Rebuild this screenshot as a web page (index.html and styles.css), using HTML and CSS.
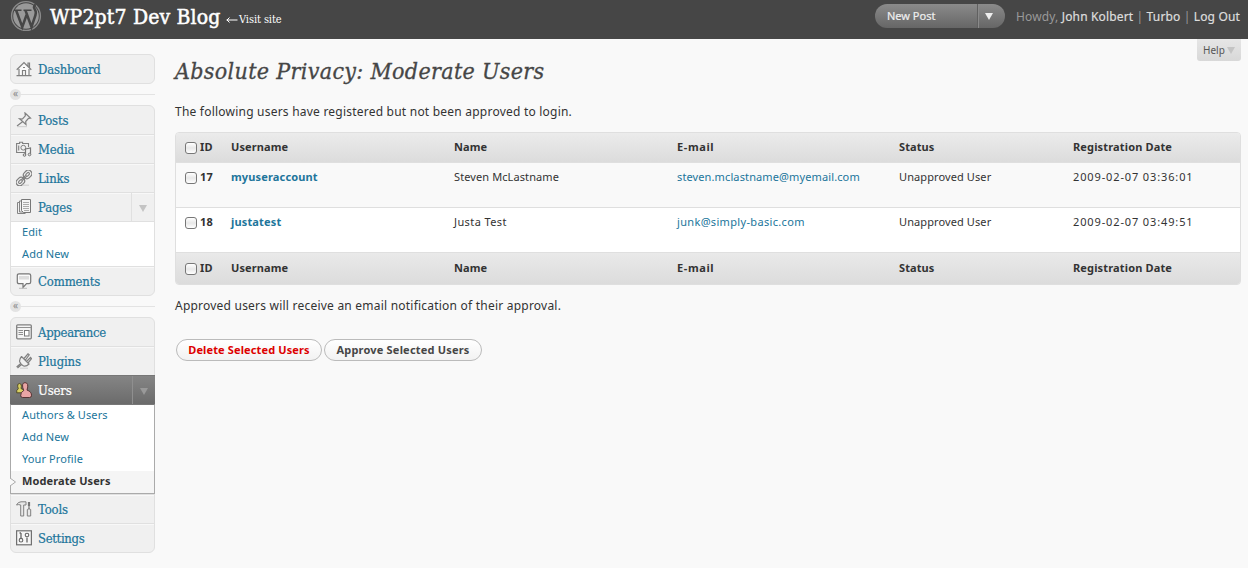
FILE: index.html
```html
<!DOCTYPE html>
<html lang="en">
<head>
<meta charset="utf-8">
<title>Absolute Privacy: Moderate Users</title>
<link rel="stylesheet" href="styles.css">
</head>
<body>
<header class="topbar">
  <svg class="logo" viewBox="0 0 32 32"><circle cx="16" cy="16" r="14.400" fill="#464646" stroke="#8b8b8b" stroke-width="1.400"/><circle cx="16" cy="16" r="12.800" fill="#999"/><path d="M4 10.300h7.500M13.500 10.300h8" fill="none" stroke="#464646" stroke-width="1.400"/><path d="M6.200 10.500l6.100 16.500L16.500 15M15.500 10.500l6 16.500 4-12c.9-3 .2-4.500-1-6.200-1.200-1.800-.2-3.800 1.300-4" fill="none" stroke="#464646" stroke-width="2.500"/></svg>
  <h1 class="site">WP2pt7 Dev Blog</h1>
  <a class="visit"><svg class="larrow" viewBox="0 0 12 8"><path d="M0.500 4h11M3.500 1.500L1 4l2.500 2.500" fill="none" stroke="#fff"/></svg><span>Visit site</span></a>
  <div class="newpost"><span class="np-label">New Post</span><span class="np-tog"><i class="tri"></i></span></div>
  <div class="howdy">Howdy, <a>John Kolbert</a> | <a>Turbo</a> | <a>Log Out</a></div>
</header>
<div class="page">
  <nav class="menu">
    <div class="group">
      <div class="item"><svg class="ico" viewBox="0 0 16 16"><path d="M3 8v6.500h10V8L8 3z" fill="#fafafa"/><path d="M.7 8.700L8 1.500l7.300 7.200M12 5V2h1.500v4.500M3 8v6.500h10V8M6.500 14.500V9.500h3v5M0.500 14.700h15M7 6.500h2" fill="none" stroke="#808080" stroke-width="1.200"/></svg><a class="t-dash">Dashboard</a></div>
    </div>
    <div class="sep"><span class="dot">«</span><span class="rule"></span></div>
    <div class="group">
      <div class="item"><svg class="ico" viewBox="0 0 16 16"><path d="M9 1l5.500 5-2 .3L9.700 9.500l.3 3L3.500 6.800l3 .2L9.300 3.800zM6.500 9.700L1 14" fill="#eee" stroke="#808080" stroke-width="1.200"/><path d="M1 14.700h10" stroke="#ccc"/></svg><a class="t-posts">Posts</a></div>
      <div class="item"><svg class="ico" viewBox="0 0 16 16"><path d="M9 11.500H.6v-9h3V1.200h3v1.300h5.900V6M2.700 4.500v5" fill="none" stroke="#808080" stroke-width="1.100"/><circle cx="7.300" cy="6.700" r="2.400" fill="none" stroke="#808080"/><path d="M9.500 14V8l5-1v6.500" fill="none" stroke="#777" stroke-width="1.200"/><circle cx="8.500" cy="14" r="1.300" fill="#ddd" stroke="#777"/><circle cx="13.500" cy="13.500" r="1.300" fill="#ddd" stroke="#777"/></svg><a class="t-media">Media</a></div>
      <div class="item"><svg class="ico" viewBox="0 0 16 16"><g fill="none" stroke="#808080" stroke-width="1.200" transform="rotate(-45 8 8)"><rect x="-1.600" y="4.500" width="9" height="7" rx="3.500"/><rect x=".8" y="6.800" width="4.200" height="2.400" rx="1.200"/><rect x="8.600" y="4.500" width="9" height="7" rx="3.500"/><rect x="11" y="6.800" width="4.200" height="2.400" rx="1.200"/><path d="M5 7.300h6M5 8.700h6"/></g><path d="M6 15.200h7" stroke="#ccc"/></svg><a class="t-links">Links</a></div>
      <div class="item has-tog"><svg class="ico" viewBox="0 0 16 16"><path d="M3 3.500H1.500v11h8M5 2H3.500v11h8" fill="none" stroke="#858585"/><path d="M5.500.5h9v13h-7l-2-2z" fill="#f4f4f4" stroke="#777"/><path d="M7 3.500h6M7 5.500h6M7 7.500h6M7 9.500h6M8 11.500h5" stroke="#aaa"/></svg><a class="t-pages">Pages</a><span class="tog"><i class="tri"></i></span></div>
      <div class="sub"><a>Edit</a><a>Add New</a></div>
      <div class="item"><svg class="ico" viewBox="0 0 16 16"><path d="M3 .8h10q1.700 0 1.700 1.700v6.500q0 1.700-1.700 1.700h-2.500L7 14.500v-3.800H3Q1.300 10.700 1.300 9V2.500Q1.300.8 3 .8z" fill="#fafafa" stroke="#777" stroke-width="1.200"/><path d="M3 3h10v3.500H3z" fill="#ddd"/><path d="M3 15.300h8" stroke="#bbb"/></svg><a class="t-comm">Comments</a></div>
    </div>
    <div class="sep"><span class="dot">«</span><span class="rule"></span></div>
    <div class="group">
      <div class="item"><svg class="ico" viewBox="0 0 16 16"><rect x=".7" y=".8" width="14.600" height="14" rx="1" fill="#f4f4f4" stroke="#808080" stroke-width="1.300"/><path d="M1 3.500h14M2.500 6.500H7M2.500 8.500H7M2.500 10.500H7" stroke="#909090"/><rect x="8.500" y="6.500" width="4.500" height="5.500" fill="#fff" stroke="#777"/></svg><a class="t-app">Appearance</a></div>
      <div class="item"><svg class="ico" viewBox="0 0 16 16"><path d="M5.500 3.500l7.500 7.500Q10.500 13.700 7.500 13L5.500 11.500 1.500 15M5.500 3.500Q3 6.500 3.800 9l1 1.500L.6 14M8 5.500L12 .8l1.200 1L9.500 7M10.500 8.500L14.500 4.500l1 1.200L12 10" fill="none" stroke="#808080" stroke-width="1.200"/><path d="M4 15.200h8" stroke="#ccc"/></svg><a class="t-plug">Plugins</a></div>
      <div class="item current"><svg class="ico" viewBox="0 0 16 16"><path d="M.7 10.800q-.5-3 1.600-4Q.6 1.800 3.400 1.500 6.200 1.800 5 6.500L8 8v2.800z" fill="#d9d164" stroke="#4c4420" stroke-width=".9"/><path d="M4.700 13.800q-.2-4 3-5.200Q4.800.9 9 .6q4.300.3 2 7.500 4.800 1.500 4.500 5.700-.3 1.700-2 1.700H6.700q-1.800 0-2-1.700z" fill="#e9a5a5" stroke="#4d2a2a" stroke-width=".9"/></svg><a class="t-users">Users</a><span class="tog"><i class="tri"></i></span></div>
      <div class="sub current-sub"><a>Authors &amp; Users</a><a>Add New</a><a>Your Profile</a><a class="on">Moderate Users<svg class="notch" viewBox="0 0 6 8"><path d="M0 0l5.500 4L0 8" fill="#f9f9f9" stroke="#aaa"/></svg></a></div>
      <div class="item"><svg class="ico" viewBox="0 0 16 16"><path d="M.5 4Q2 .8 5 .8h5v3.200H7.700v11h-3V4q-2.200-.8-4.200 0zM11.300 15V8.500q1.700-1.500 3.400 0V15z" fill="#e8e8e8" stroke="#808080"/><path d="M13 1v7M12.500 1.500h1v3h-1z" stroke="#777" stroke-width="1.200"/></svg><a class="t-tools">Tools</a></div>
      <div class="item"><svg class="ico" viewBox="0 0 16 16"><rect x=".6" y=".8" width="14.800" height="14" fill="#f6f6f6" stroke="#707070" stroke-width="1.200"/><path d="M5 3v5M11 12.500V7.500M3.500 3h1.500" stroke="#666" stroke-width="1.300"/><circle cx="5" cy="10.200" r="1.800" fill="none" stroke="#666" stroke-width="1.100"/><circle cx="11" cy="5" r="1.800" fill="none" stroke="#666" stroke-width="1.100"/></svg><a class="t-set">Settings</a></div>
    </div>
  </nav>
  <main class="main">
    <div class="help">Help <i class="tri"></i></div>
    <h2 class="title">Absolute Privacy: Moderate Users</h2>
    <p class="intro">The following users have registered but not been approved to login.</p>
    <div class="table">
      <div class="row head"><b><i class="cb"></i>ID</b><b>Username</b><b>Name</b><b class="em">E-mail</b><b>Status</b><b class="reg">Registration Date</b></div>
      <div class="row"><b><i class="cb"></i>17</b><a class="u">myuseraccount</a><span>Steven McLastname</span><a class="mail">steven.mclastname@myemail.com</a><span>Unapproved User</span><span class="date">2009-02-07 03:36:01</span></div>
      <div class="row alt"><b><i class="cb"></i>18</b><a class="u u2">justatest</a><span class="short">Justa Test</span><a class="mail2">junk@simply-basic.com</a><span>Unapproved User</span><span class="date">2009-02-07 03:49:51</span></div>
      <div class="row foot"><b><i class="cb"></i>ID</b><b>Username</b><b>Name</b><b class="em">E-mail</b><b>Status</b><b class="reg">Registration Date</b></div>
    </div>
    <p class="outro">Approved users will receive an email notification of their approval.</p>
    <div class="btns"><button class="btn del">Delete Selected Users</button><button class="btn app">Approve Selected Users</button></div>
  </main>
</div>
</body>
</html>
```
FILE: styles.css
```css
* { box-sizing: border-box; }
body { margin: 0; height: 568px; overflow: hidden; background: #f9f9f9; color: #333; font: 11px/16px "Noto Sans", "Open Sans", sans-serif; }
h1, h2, p { margin: 0; font-weight: normal; }
a { color: #21759b; }
svg { display: block; flex: none; }
.tri { display: inline-block; width: 0; height: 0; border: 4px solid transparent; border-top: 7px solid #c4c4c4; border-bottom: 0; }

.topbar { height: 39px; background: #464646; display: flex; align-items: flex-start; padding-right: 7px; white-space: nowrap; }
.logo { width: 32px; height: 32px; margin: 0 0 0 10px; }
.site { margin-left: 8px; width: 176px; color: #fff; font: 21px/34px "DejaVu Serif Condensed", "DejaVu Serif", serif; letter-spacing: .15px; -webkit-text-stroke: .5px #fff; }
.visit { color: #fff; display: flex; align-items: center; gap: 1px; font: 11px/16px "DejaVu Serif Condensed", "DejaVu Serif", serif; letter-spacing: -.1px; padding-top: 12px; }
.larrow { width: 12px; height: 8px; }
.newpost { margin-left: auto; margin-top: 4px; width: 130px; height: 24px; border-radius: 12px; background: linear-gradient(#8a8a8a, #666); display: flex; color: #eee; line-height: 24px; -webkit-text-stroke: .2px #eee; }
.np-label { flex: 1; padding-left: 12px; }
.np-tog { width: 28px; border-left: 1px solid #606060; box-shadow: inset 1px 0 #8a8a8a; display: flex; align-items: center; padding-left: 7px; }
.np-tog .tri { border-top-color: #eee; }
.howdy { width: 225px; margin-left: 11px; color: #999; font-size: 12px; line-height: 33px; letter-spacing: .15px; }
.howdy a { color: #ddd; -webkit-text-stroke: .2px #ddd; }

.page { display: flex; }
.menu { width: 145px; margin: 15px 0 0 10px; flex: none; }
.group { border: 1px solid #e0e0e0; border-radius: 6px; background: #f0f0f0; }
.item { height: 29px; display: flex; align-items: center; padding-left: 5px; border-top: 1px solid #e0e0e0; box-shadow: inset 0 1px #f8f8f8; }
.item:first-child { height: 28px; border-top: 0; box-shadow: none; }
.ico { width: 16px; height: 16px; margin: 0 6px 0 0; }
.item a { margin-top: 2px; font: 13px/20px "DejaVu Serif Condensed", "DejaVu Serif", serif; letter-spacing: -.15px; -webkit-text-stroke: .2px; }
.item .t-app { letter-spacing: -.3px; }
.item .t-set { letter-spacing: -.35px; }
.item .t-dash { letter-spacing: -.2px; }
.tog { margin-left: auto; width: 23px; height: 28px; border-left: 1px solid #e0e0e0; display: flex; align-items: center; justify-content: center; padding-top: 2px; }
.sep { height: 21px; display: flex; align-items: center; }
.dot { width: 11px; height: 11px; border-radius: 50%; background: #e3e3e3; color: #888; font-size: 10px; line-height: 9px; text-align: center; }
.rule { flex: 1; height: 1px; background: #e3e3e3; }
.sub { background: #fff; border-top: 1px solid #e0e0e0; }
.sub a { display: block; height: 22px; line-height: 19px; padding-left: 11px; position: relative; letter-spacing: .1px; }
.item.current { margin: 0 -1px; padding-left: 6px; background: linear-gradient(#858585, #6b6b6b); border-top-color: #777; box-shadow: none; }
.item.current a { color: #fff; }
.item.current .tog { border-color: #8f8f8f; }
.item.current .tri { border-top-color: #999; }
.current-sub { margin: 0 -1px; border: 1px solid #aaa; border-top-color: #777; }
.sub .on { color: #333; font-weight: bold; background: #f5f5f5; }
.notch { position: absolute; left: -1px; top: 7px; width: 6px; height: 8px; }

.main { flex: 1; margin: 0 7px 0 20px; position: relative; }
.help { position: absolute; right: 0; top: 0; width: 44px; height: 22px; line-height: 22px; padding-left: 6px; color: #555; font-size: 10px; background: linear-gradient(#e6e6e6, #d8d8d8); border-radius: 0 0 3px 3px; }
.title { margin-top: 15px; color: #464646; font: italic 23px/34px "DejaVu Serif Condensed", "DejaVu Serif", serif; letter-spacing: .33px; white-space: nowrap; -webkit-text-stroke: .3px #464646; }
.intro { margin-top: 13px; line-height: 22px; font-size: 12px; letter-spacing: .22px; white-space: nowrap; }
.table { margin-top: 9px; border: 1px solid #dfdfdf; border-radius: 4px; overflow: hidden; white-space: nowrap; }
.row { display: grid; grid-template-columns: 46px 223px 223px 222px 174px 1fr; padding-left: 9px; height: 45px; line-height: 28px; border-top: 1px solid #dfdfdf; letter-spacing: .1px; }
.row > :first-child { display: flex; align-items: center; height: 28px; }
.row.head { height: 29px; border-top: 0; background: linear-gradient(#ebebeb, #dcdcdc); }
.row.alt { background: #fff; }
.row.foot { height: 32px; line-height: 30px; background: linear-gradient(#e9e9e9, #dcdcdc); }
.row.foot > :first-child { height: 30px; }
.u { font-weight: bold; }
.u, .reg { letter-spacing: .15px; }
.em { letter-spacing: .6px; }
.mail { letter-spacing: .12px; }
.mail2 { letter-spacing: .33px; }
.short { letter-spacing: .4px; }
.date { letter-spacing: .87px; }
.cb { width: 12px; height: 12px; margin: 1px 3px 0 0; border: 1px solid #777; border-radius: 3px; background: linear-gradient(#fff, #e8e8e8 50%, #fff); }
.outro { margin-top: 10px; line-height: 22px; font-size: 12px; letter-spacing: .22px; white-space: nowrap; }
.btns { margin: 22px 0 0 1px; display: flex; gap: 2px; }
.btn { height: 22px; padding: 0; border: 1px solid #bbb; border-radius: 11px; background: linear-gradient(#fff, #f2f2f2); color: #464646; font: bold 11px/18px "Noto Sans", "Open Sans", sans-serif; letter-spacing: .2px; white-space: nowrap; }
.del { width: 146px; color: #d00; letter-spacing: .13px; }
.app { width: 158px; }
```
